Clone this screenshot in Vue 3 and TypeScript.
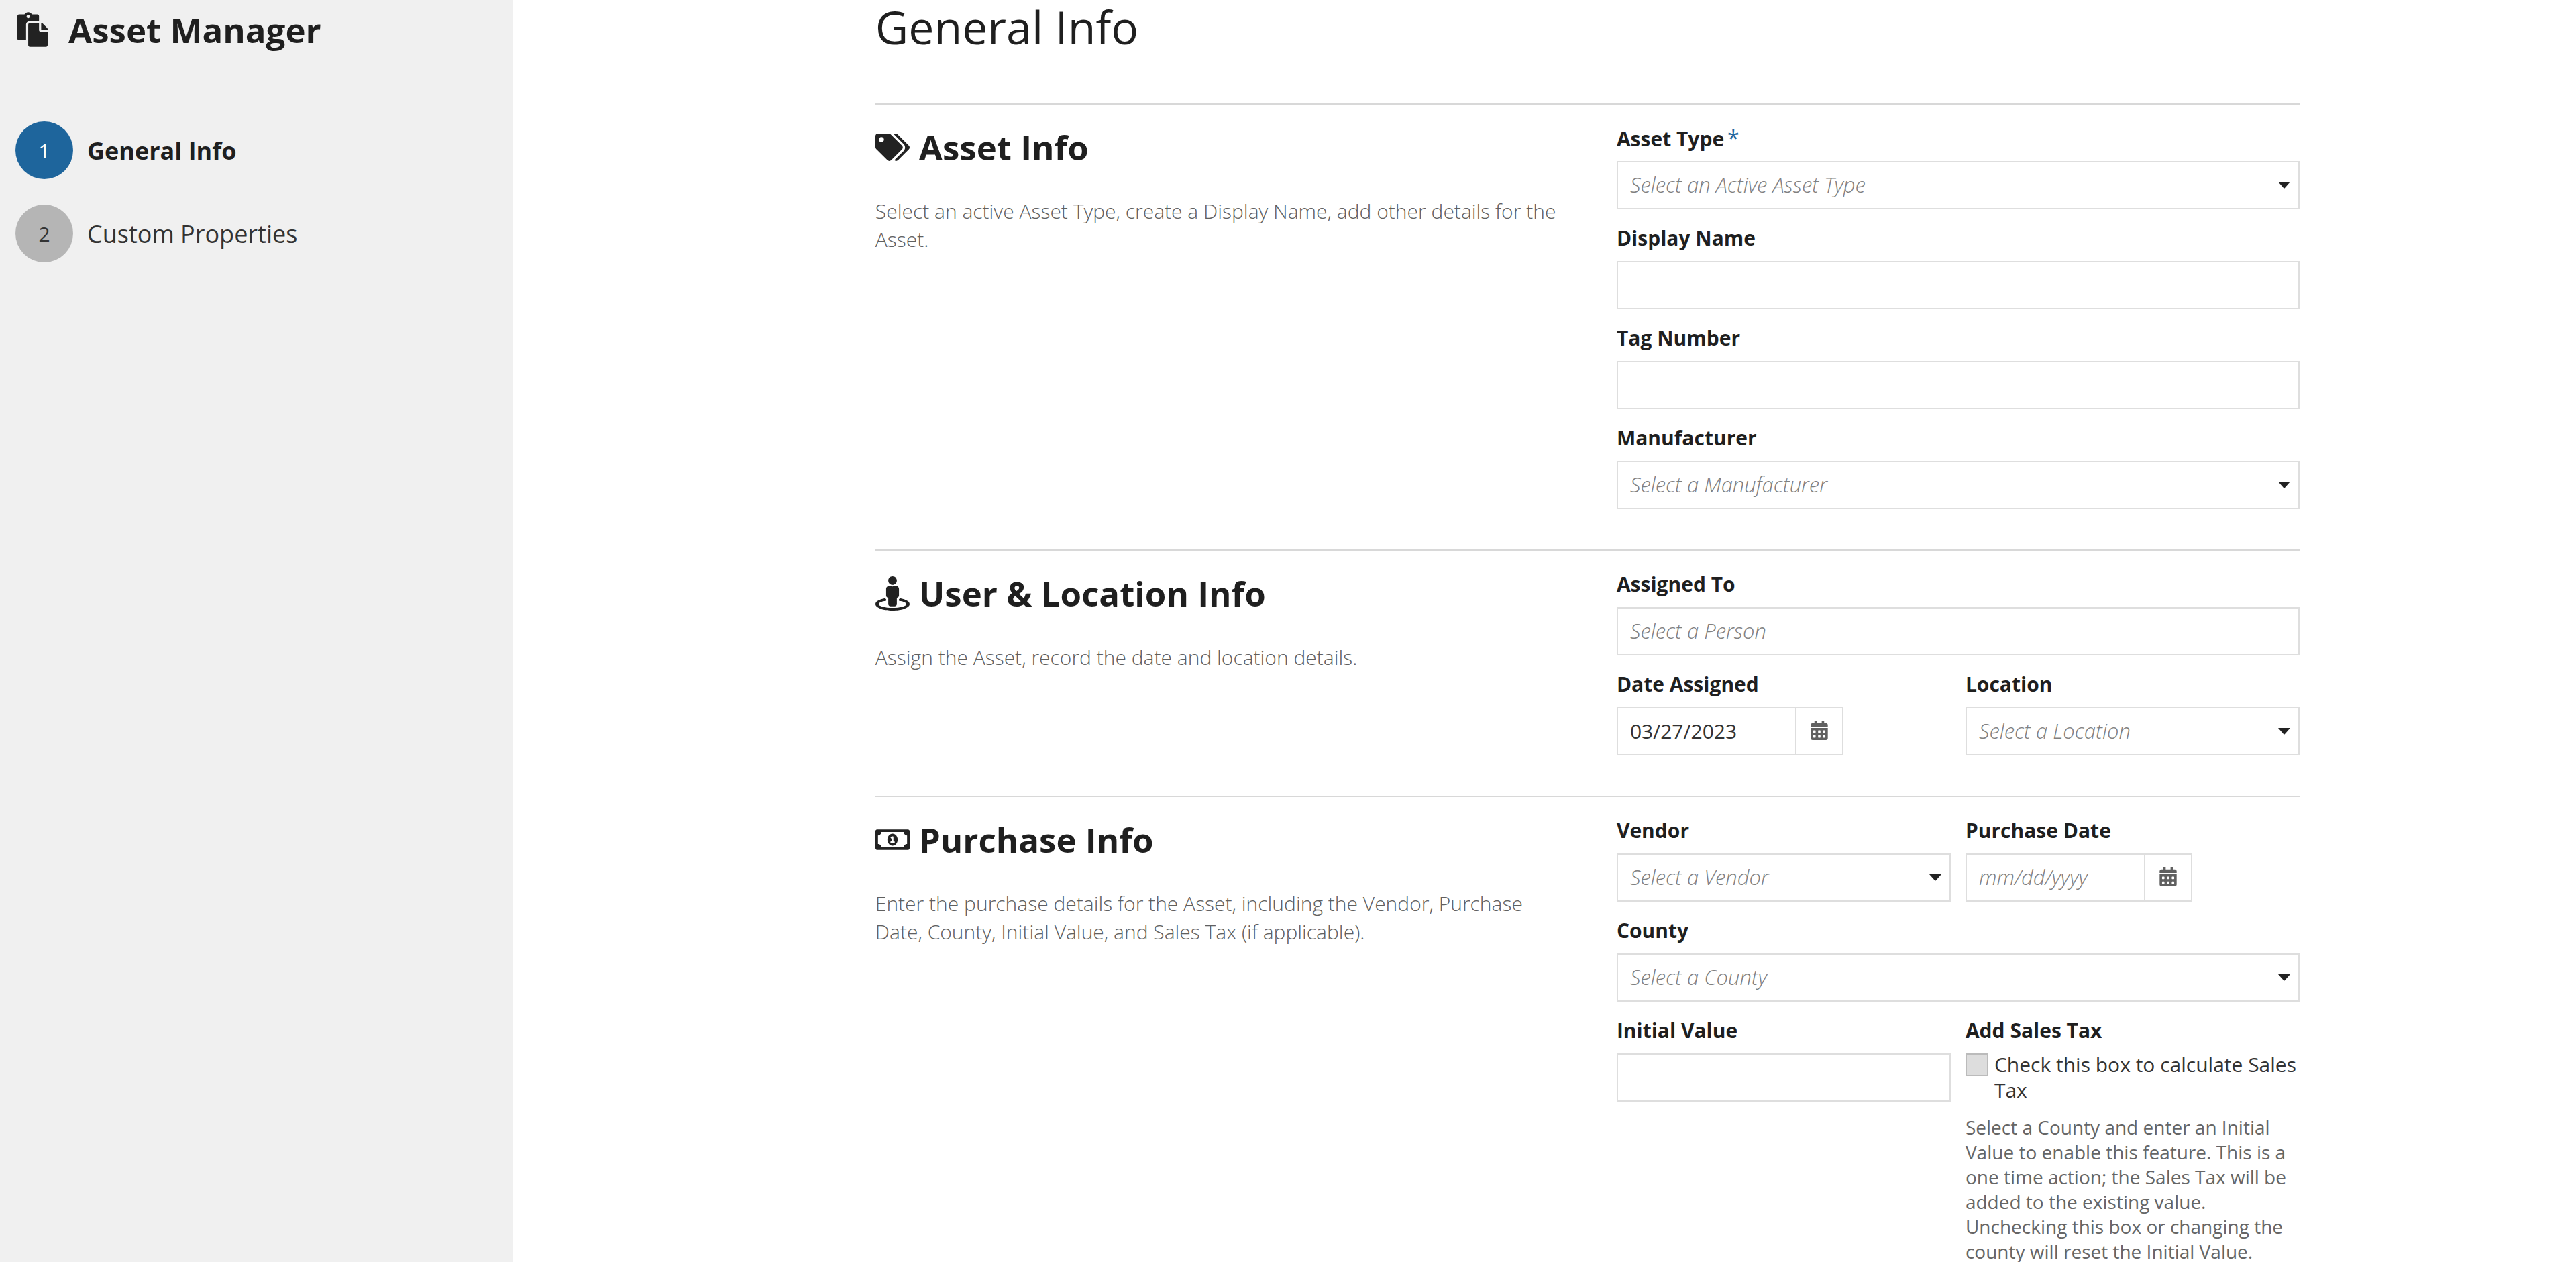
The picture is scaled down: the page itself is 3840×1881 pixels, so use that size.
<script setup lang="ts">
import { ref } from 'vue'

interface Step {
  number: number
  label: string
}

const steps: Step[] = [
  { number: 1, label: 'General Info' },
  { number: 2, label: 'Custom Properties' },
]

const currentStep = ref(1)
const assetType = ref('')
const displayName = ref('')
const tagNumber = ref('')
const manufacturer = ref('')
const assignedTo = ref('')
const dateAssigned = ref('03/27/2023')
const location = ref('')
const vendor = ref('')
const purchaseDate = ref('')
const county = ref('')
const initialValue = ref('')
const addSalesTax = ref(false)

const calendarIcon =
  'M0 464c0 26.500 21.500 48 48 48h352c26.500 0 48-21.500 48-48V192H0v272zm320-196c0-6.600 5.400-12 12-12h40c6.600 0 12 5.400 12 12v40c0 6.600-5.400 12-12 12h-40c-6.600 0-12-5.400-12-12v-40zm0 128c0-6.600 5.400-12 12-12h40c6.600 0 12 5.400 12 12v40c0 6.600-5.400 12-12 12h-40c-6.600 0-12-5.400-12-12v-40zM192 268c0-6.600 5.400-12 12-12h40c6.600 0 12 5.400 12 12v40c0 6.600-5.400 12-12 12h-40c-6.600 0-12-5.400-12-12v-40zm0 128c0-6.600 5.400-12 12-12h40c6.600 0 12 5.400 12 12v40c0 6.600-5.400 12-12 12h-40c-6.600 0-12-5.400-12-12v-40zM64 268c0-6.600 5.400-12 12-12h40c6.600 0 12 5.400 12 12v40c0 6.600-5.400 12-12 12H76c-6.600 0-12-5.400-12-12v-40zm0 128c0-6.600 5.400-12 12-12h40c6.600 0 12 5.400 12 12v40c0 6.600-5.400 12-12 12H76c-6.600 0-12-5.400-12-12v-40zM400 64h-48V16c0-8.800-7.200-16-16-16h-32c-8.800 0-16 7.200-16 16v48H160V16c0-8.800-7.200-16-16-16h-32c-8.800 0-16 7.200-16 16v48H48C21.500 64 0 85.500 0 112v48h448v-48c0-26.500-21.500-48-48-48z'
</script>

<template>
  <div class="shell">
    <aside class="sidebar">
      <div class="brand">
        <svg class="brand-icon" viewBox="0 0 448 512" aria-hidden="true">
          <path d="M128 184c0-30.879 25.122-56 56-56h136V56c0-13.255-10.745-24-24-24h-80.61C204.306 12.89 183.637 0 160 0s-44.306 12.89-55.39 32H24C10.745 32 0 42.745 0 56v336c0 13.255 10.745 24 24 24h104V184zm32-144c13.255 0 24 10.745 24 24s-10.745 24-24 24-24-10.745-24-24 10.745-24 24-24zm184 248h104v200c0 13.255-10.745 24-24 24H184c-13.255 0-24-10.745-24-24V184c0-13.255 10.745-24 24-24h136v104c0 13.2 10.8 24 24 24zm104-38.059V256h-96v-96h6.059a24 24 0 0 1 16.97 7.029l65.941 65.941a24.002 24.002 0 0 1 7.03 16.971z" />
        </svg>
        <h2 class="title">Asset Manager</h2>
      </div>
      <nav class="steps">
        <a
          v-for="step in steps"
          :key="step.number"
          href="#"
          class="step"
          :class="{ active: step.number === currentStep }"
          @click.prevent="currentStep = step.number"
        >
          <span class="badge">{{ step.number }}</span>
          <span>{{ step.label }}</span>
        </a>
      </nav>
    </aside>

    <main class="main">
      <h1 class="page-title">General Info</h1>

      <section class="section">
        <div>
          <h2 class="title heading">
            <svg class="heading-icon" viewBox="0 0 640 512" aria-hidden="true">
              <path d="M497.941 225.941L286.059 14.059A48 48 0 0 0 252.118 0H48C21.49 0 0 21.49 0 48v204.118a48 48 0 0 0 14.059 33.941l211.882 211.882c18.744 18.745 49.136 18.746 67.882 0l204.118-204.118c18.745-18.745 18.745-49.137 0-67.882zM112 160c-26.51 0-48-21.49-48-48s21.49-48 48-48 48 21.49 48 48-21.49 48-48 48zm513.941 133.823L421.823 497.941c-18.745 18.745-49.137 18.745-67.882 0l-.36-.36L527.64 323.522c16.999-16.999 26.36-39.6 26.36-63.64s-9.362-46.641-26.36-63.64L331.397 0h48.721a48 48 0 0 1 33.941 14.059l211.882 211.882c18.745 18.745 18.745 49.137 0 67.882z" />
            </svg>
            Asset Info
          </h2>
          <p class="description">
            Select an active Asset Type, create a Display Name, add other details for the Asset.
          </p>
        </div>
        <div class="fields">
          <div class="field wide">
            <label class="label" for="asset-type">Asset Type<span class="required">*</span></label>
            <div class="select-box">
              <select id="asset-type" v-model="assetType" class="control" :class="{ empty: !assetType }">
                <option value="">Select an Active Asset Type</option>
              </select>
              <svg class="caret" viewBox="0 0 18 10" aria-hidden="true"><path d="M0 0h18l-8 9q-1 1-2 0z" /></svg>
            </div>
          </div>
          <div class="field wide">
            <label class="label" for="display-name">Display Name</label>
            <input id="display-name" v-model="displayName" class="control" type="text" />
          </div>
          <div class="field wide">
            <label class="label" for="tag-number">Tag Number</label>
            <input id="tag-number" v-model="tagNumber" class="control" type="text" />
          </div>
          <div class="field wide">
            <label class="label" for="manufacturer">Manufacturer</label>
            <div class="select-box">
              <select id="manufacturer" v-model="manufacturer" class="control" :class="{ empty: !manufacturer }">
                <option value="">Select a Manufacturer</option>
              </select>
              <svg class="caret" viewBox="0 0 18 10" aria-hidden="true"><path d="M0 0h18l-8 9q-1 1-2 0z" /></svg>
            </div>
          </div>
        </div>
      </section>

      <section class="section">
        <div>
          <h2 class="title heading">
            <svg class="heading-icon" viewBox="0 0 512 512" aria-hidden="true">
              <path d="M367.900 329.760c-4.620 5.300-9.780 10.100-15.900 13.650v22.940c66.520 9.340 112 28.050 112 49.650 0 30.930-93.120 56-208 56S48 446.930 48 416c0-21.600 45.480-40.300 112-49.650v-22.940c-6.120-3.550-11.280-8.350-15.900-13.650C58.870 345.340 0 378.050 0 416c0 53.020 114.620 96 256 96s256-42.980 256-96c0-37.950-58.870-70.660-144.100-86.240zM256 128c35.350 0 64-28.650 64-64S291.350 0 256 0s-64 28.650-64 64 28.650 64 64 64zm-64 192v96c0 17.670 14.330 32 32 32h64c17.670 0 32-14.330 32-32v-96c17.670 0 32-14.330 32-32v-96c0-26.510-21.490-48-48-48h-11.800c-11.070 5.030-23.260 8-36.200 8s-25.130-2.970-36.200-8H208c-26.510 0-48 21.490-48 48v96c0 17.670 14.330 32 32 32z" />
            </svg>
            User &amp; Location Info
          </h2>
          <p class="description">Assign the Asset, record the date and location details.</p>
        </div>
        <div class="fields">
          <div class="field wide">
            <label class="label" for="assigned-to">Assigned To</label>
            <input id="assigned-to" v-model="assignedTo" class="control" type="text" placeholder="Select a Person" />
          </div>
          <div class="field">
            <label class="label" for="date-assigned">Date Assigned</label>
            <div class="date-box">
              <input id="date-assigned" v-model="dateAssigned" class="control" type="text" placeholder="mm/dd/yyyy" />
              <button class="date-button" type="button" aria-label="Choose assigned date">
                <svg class="calendar" viewBox="0 0 448 512" aria-hidden="true"><path :d="calendarIcon" /></svg>
              </button>
            </div>
          </div>
          <div class="field">
            <label class="label" for="location">Location</label>
            <div class="select-box">
              <select id="location" v-model="location" class="control" :class="{ empty: !location }">
                <option value="">Select a Location</option>
              </select>
              <svg class="caret" viewBox="0 0 18 10" aria-hidden="true"><path d="M0 0h18l-8 9q-1 1-2 0z" /></svg>
            </div>
          </div>
        </div>
      </section>

      <section class="section">
        <div>
          <h2 class="title heading">
            <svg class="heading-icon" viewBox="0 0 640 512" aria-hidden="true">
              <path d="M608 64H32C14.330 64 0 78.330 0 96v320c0 17.670 14.330 32 32 32h576c17.670 0 32-14.330 32-32V96c0-17.670-14.330-32-32-32zm-16 272c-35.350 0-64 28.650-64 64H112c0-35.350-28.650-64-64-64V176c35.350 0 64-28.650 64-64h416c0 35.350 28.650 64 64 64v160z" fill-rule="evenodd" />
              <path d="M320 144c-53 0-96 50-96 112s43 112 96 112 96-50 96-112-43-112-96-112zm40 168c0 4-4 8-8 8h-64c-4 0-8-4-8-8v-16c0-4 4-8 8-8h16v-55c-5 3-9 2-12-2l-9-13c-2-4-2-9 2-11l16-11c4-3 8-4 13-4h14c4 0 8 4 8 8v88h16c4 0 8 4 8 8z" fill-rule="evenodd" />
            </svg>
            Purchase Info
          </h2>
          <p class="description">
            Enter the purchase details for the Asset, including the Vendor, Purchase Date, County,
            Initial Value, and Sales Tax (if applicable).
          </p>
        </div>
        <div class="fields">
          <div class="field">
            <label class="label" for="vendor">Vendor</label>
            <div class="select-box">
              <select id="vendor" v-model="vendor" class="control" :class="{ empty: !vendor }">
                <option value="">Select a Vendor</option>
              </select>
              <svg class="caret" viewBox="0 0 18 10" aria-hidden="true"><path d="M0 0h18l-8 9q-1 1-2 0z" /></svg>
            </div>
          </div>
          <div class="field">
            <label class="label" for="purchase-date">Purchase Date</label>
            <div class="date-box">
              <input id="purchase-date" v-model="purchaseDate" class="control" type="text" placeholder="mm/dd/yyyy" />
              <button class="date-button" type="button" aria-label="Choose purchase date">
                <svg class="calendar" viewBox="0 0 448 512" aria-hidden="true"><path :d="calendarIcon" /></svg>
              </button>
            </div>
          </div>
          <div class="field wide">
            <label class="label" for="county">County</label>
            <div class="select-box">
              <select id="county" v-model="county" class="control" :class="{ empty: !county }">
                <option value="">Select a County</option>
              </select>
              <svg class="caret" viewBox="0 0 18 10" aria-hidden="true"><path d="M0 0h18l-8 9q-1 1-2 0z" /></svg>
            </div>
          </div>
          <div class="field">
            <label class="label" for="initial-value">Initial Value</label>
            <input id="initial-value" v-model="initialValue" class="control" type="text" />
          </div>
          <div class="field tax">
            <div class="label">Add Sales Tax</div>
            <label class="check" for="sales-tax">
              <input id="sales-tax" v-model="addSalesTax" type="checkbox" class="checkbox" disabled aria-describedby="tax-help" />
              <span>Check this box to calculate Sales Tax</span>
            </label>
            <p id="tax-help" class="help">
              Select a County and enter an Initial Value to enable this feature. This is a one time
              action; the Sales Tax will be added to the existing value. Unchecking this box or
              changing the county will reset the Initial Value.
            </p>
          </div>
        </div>
      </section>
    </main>
  </div>
</template>

<style>
html {
  scrollbar-width: none;
}

body {
  margin: 0;
}
</style>

<style scoped>
.shell {
  display: flex;
  min-height: 100vh;
  background: #fff;
  color: #1f1f1f;
  font-family: "Open Sans", "Noto Sans", sans-serif;
  font-size: 30px;
}

.shell *,
.shell {
  box-sizing: border-box;
}

.sidebar {
  flex: none;
  width: 19.92%;
  padding: 11px 23px;
  background: #f0f0f0;
}

.title {
  margin: 0;
  font-size: 51px;
  font-weight: 700;
  line-height: 66px;
}

.brand {
  display: flex;
  align-items: center;
  gap: 31px;
  padding-left: 3px;
}

.brand-icon {
  width: 45px;
  height: 52px;
}

svg {
  fill: #222;
}

.steps {
  display: flex;
  flex-direction: column;
  gap: 38px;
  margin-top: 104px;
}

.step {
  display: flex;
  align-items: center;
  gap: 21px;
  color: #333;
  font-size: 36px;
  text-decoration: none;
}

.step.active {
  color: #1f1f1f;
  font-weight: 700;
}

.badge {
  display: flex;
  flex: none;
  align-items: center;
  justify-content: center;
  width: 86px;
  height: 86px;
  border-radius: 50%;
  background: #b5b5b5;
  font-size: 30px;
  font-weight: 400;
}

.active .badge {
  background: #1e659c;
  color: #fff;
}

.main {
  flex: 1;
  min-width: 0;
  padding: 0 10.73% 0 14.06%;
}

.page-title {
  margin: 0 0 74px;
  font-size: 68px;
  font-weight: 400;
  line-height: 80px;
}

.section {
  display: grid;
  grid-template-columns: 1fr 1fr;
  gap: 87px;
  padding: 30px 0 60px;
  border-top: 2px solid #d8d8d8;
}

.heading {
  display: flex;
  align-items: center;
  gap: 14px;
}

.heading-icon {
  flex: none;
  width: 51px;
  height: 51px;
}

.description {
  margin: 42px 0 0;
  color: #606060;
  font-weight: 300;
  line-height: 42px;
}

.fields {
  display: grid;
  grid-template-columns: 1fr 1fr;
  gap: 23px 22px;
  align-items: start;
}

.wide {
  grid-column: 1 / -1;
}

.label {
  display: block;
  height: 40px;
  margin-bottom: 14px;
  font-weight: 700;
  line-height: 40px;
}

.required {
  margin-left: 5px;
  color: #1e659c;
  font-size: 32px;
  font-weight: 400;
}

.control {
  display: block;
  width: 100%;
  height: 72px;
  margin: 0;
  padding: 0 18px 2px;
  border: 2px solid #dedede;
  border-radius: 0;
  outline: none;
  background: #fff;
  color: #333;
  font-family: inherit;
  font-size: 30px;
  appearance: none;
}

.control.empty,
.control::placeholder {
  color: #808080;
  font-size: 31px;
  font-style: italic;
  font-weight: 300;
  opacity: 1;
}

.select-box {
  position: relative;
}

.caret {
  position: absolute;
  top: 31px;
  right: 14px;
  width: 18px;
  height: 10px;
  pointer-events: none;
}

.date-box {
  display: flex;
  width: 338px;
}

.date-box .control {
  flex: 1;
  min-width: 0;
}

.date-button {
  display: flex;
  flex: none;
  align-items: center;
  justify-content: center;
  width: 70px;
  height: 72px;
  padding: 0 0 4px;
  border: 2px solid #dedede;
  border-left: 0;
  background: #fff;
}

.calendar {
  width: 26px;
  height: 29px;
  fill: #606060;
}

.tax .label {
  margin-bottom: 12px;
}

.check {
  display: flex;
  align-items: flex-start;
  gap: 9px;
  color: #333;
  line-height: 38px;
}

.checkbox {
  flex: none;
  width: 34px;
  height: 34px;
  margin: 2px 0 0;
  border: 2px solid #bbb;
  border-radius: 0;
  background: #ddd;
  appearance: none;
}

.help {
  margin: 18px 0 0;
  color: #666;
  font-size: 28px;
  line-height: 37px;
}
</style>
